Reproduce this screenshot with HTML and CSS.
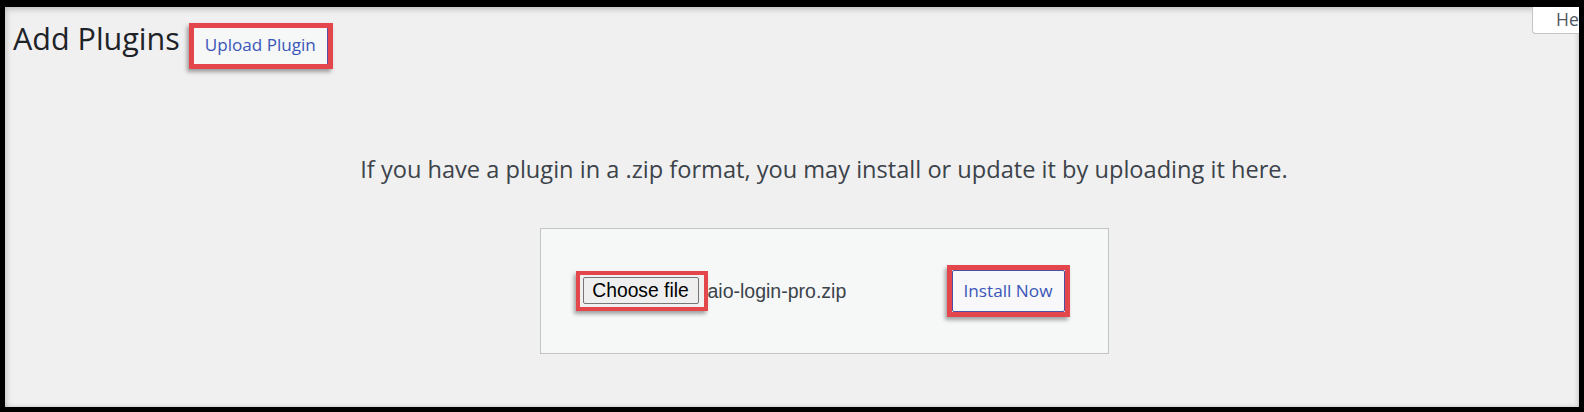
FILE: index.html
```html
<!DOCTYPE html>
<html lang="en">
<head>
<meta charset="utf-8">
<title>Add Plugins</title>
<link rel="stylesheet" href="styles.css">
</head>
<body>
<div class="frame">
  <div class="screen">
    <header class="top">
      <div class="title-row">
        <h1 class="title">Add Plugins</h1>
        <span class="mark mark-upload"><a class="page-action" href="#">Upload Plugin</a></span>
      </div>
      <div class="help-tab">Help</div>
    </header>
    <section class="upload">
      <p class="help-text">If you have a plugin in a .zip format, you may install or update it by uploading it here.</p>
      <div class="upload-box">
        <div class="file-input">
          <span class="mark mark-file"><button class="file-btn" type="button">Choose file</button></span>
          <span class="file-name">aio-login-pro.zip</span>
        </div>
        <span class="mark mark-install"><button class="btn-secondary" type="button">Install Now</button></span>
      </div>
    </section>
  </div>
</div>
</body>
</html>
```

FILE: styles.css
```css
* { box-sizing: border-box; }
html, body { margin: 0; padding: 0; }
body { background: #000; width: 1584px; height: 412px; overflow: hidden; }

.frame {
  padding: 7px 5px 5px 5px;
  height: 412px;
}
.screen {
  height: 400px;
  background: #f0f0f1;
  overflow: hidden;
  box-shadow: inset 3px 4px 6px -2px rgba(0,0,0,.22), inset -3px -2px 5px -2px rgba(0,0,0,.18);
  font-family: "Open Sans", "Noto Sans", sans-serif;
  color: #1d2327;
}

.top {
  display: flex;
  justify-content: space-between;
  align-items: flex-start;
  height: 62px;
}
.title-row {
  display: flex;
  align-items: flex-start;
  padding-left: 8px;
}
.title {
  margin: 13px 9px 0 0;
  font-size: 30.5px;
  font-weight: 400;
  line-height: 37px;
  color: #1d2327;
}

.mark {
  display: inline-flex;
  border: 5px solid #e4474b;
  box-shadow: -2px 3px 4px rgba(0,0,0,.35);
  background: #f6f7f7;
}
.mark-upload {
  margin-top: 16px;
  width: 144px;
  height: 46px;
}
.page-action {
  flex: 1;
  display: flex;
  align-items: center;
  justify-content: center;
  padding-bottom: 4px;
  font-size: 17.1px;
  color: #3a56b8;
  text-decoration: none;
  border-right: 1px solid #5b4fa8;
}

.help-tab {
  width: 80px;
  height: 27px;
  margin-right: -33px;
  background: #fff;
  border-left: 1px solid #c3c4c7;
  border-bottom: 1px solid #c3c4c7;
  border-bottom-left-radius: 4px;
  padding: 0 0 0 23px;
  font-size: 17.5px;
  line-height: 24px;
  color: #50575e;
}

.upload {
  padding-left: 64px;
  display: flex;
  flex-direction: column;
  align-items: center;
}
.help-text {
  margin: 84px 0 0 0;
  font-size: 23.6px;
  line-height: 32px;
  color: #3c434a;
  white-space: nowrap;
}
.upload-box {
  margin-top: 43px;
  width: 569px;
  height: 126px;
  background: #f6f7f7;
  border: 1px solid #c3c4c7;
  display: flex;
  align-items: center;
  justify-content: space-between;
  padding: 0 38px 0 35px;
}
.file-input {
  display: flex;
  align-items: center;
}
.mark-file {
  border-width: 4px;
  width: 132px;
  height: 40px;
  padding: 2px 4px 3px 3px;
  background: #f0f0f0;
}
.file-btn {
  width: 116px;
  height: 27px;
  padding: 0;
  margin: 0;
  background: #efefef;
  border: 1px solid #767676;
  border-radius: 2px;
  font-family: "Liberation Sans", Arial, sans-serif;
  font-size: 19.3px;
  color: #000;
  line-height: 25px;
}
.file-name {
  font-family: "Liberation Sans", Arial, sans-serif;
  font-size: 19.5px;
  color: #3c434a;
}
.mark-install {
  width: 123px;
  height: 52px;
  padding: 0;
}
.btn-secondary {
  flex: 1;
  margin: 0;
  padding: 0 0 2px 0;
  background: #f8f8fa;
  border: 1px solid #4b4fa6;
  border-radius: 2px;
  font-family: "Open Sans", "Noto Sans", sans-serif;
  font-size: 17.2px;
  color: #3a56b8;
}
```
